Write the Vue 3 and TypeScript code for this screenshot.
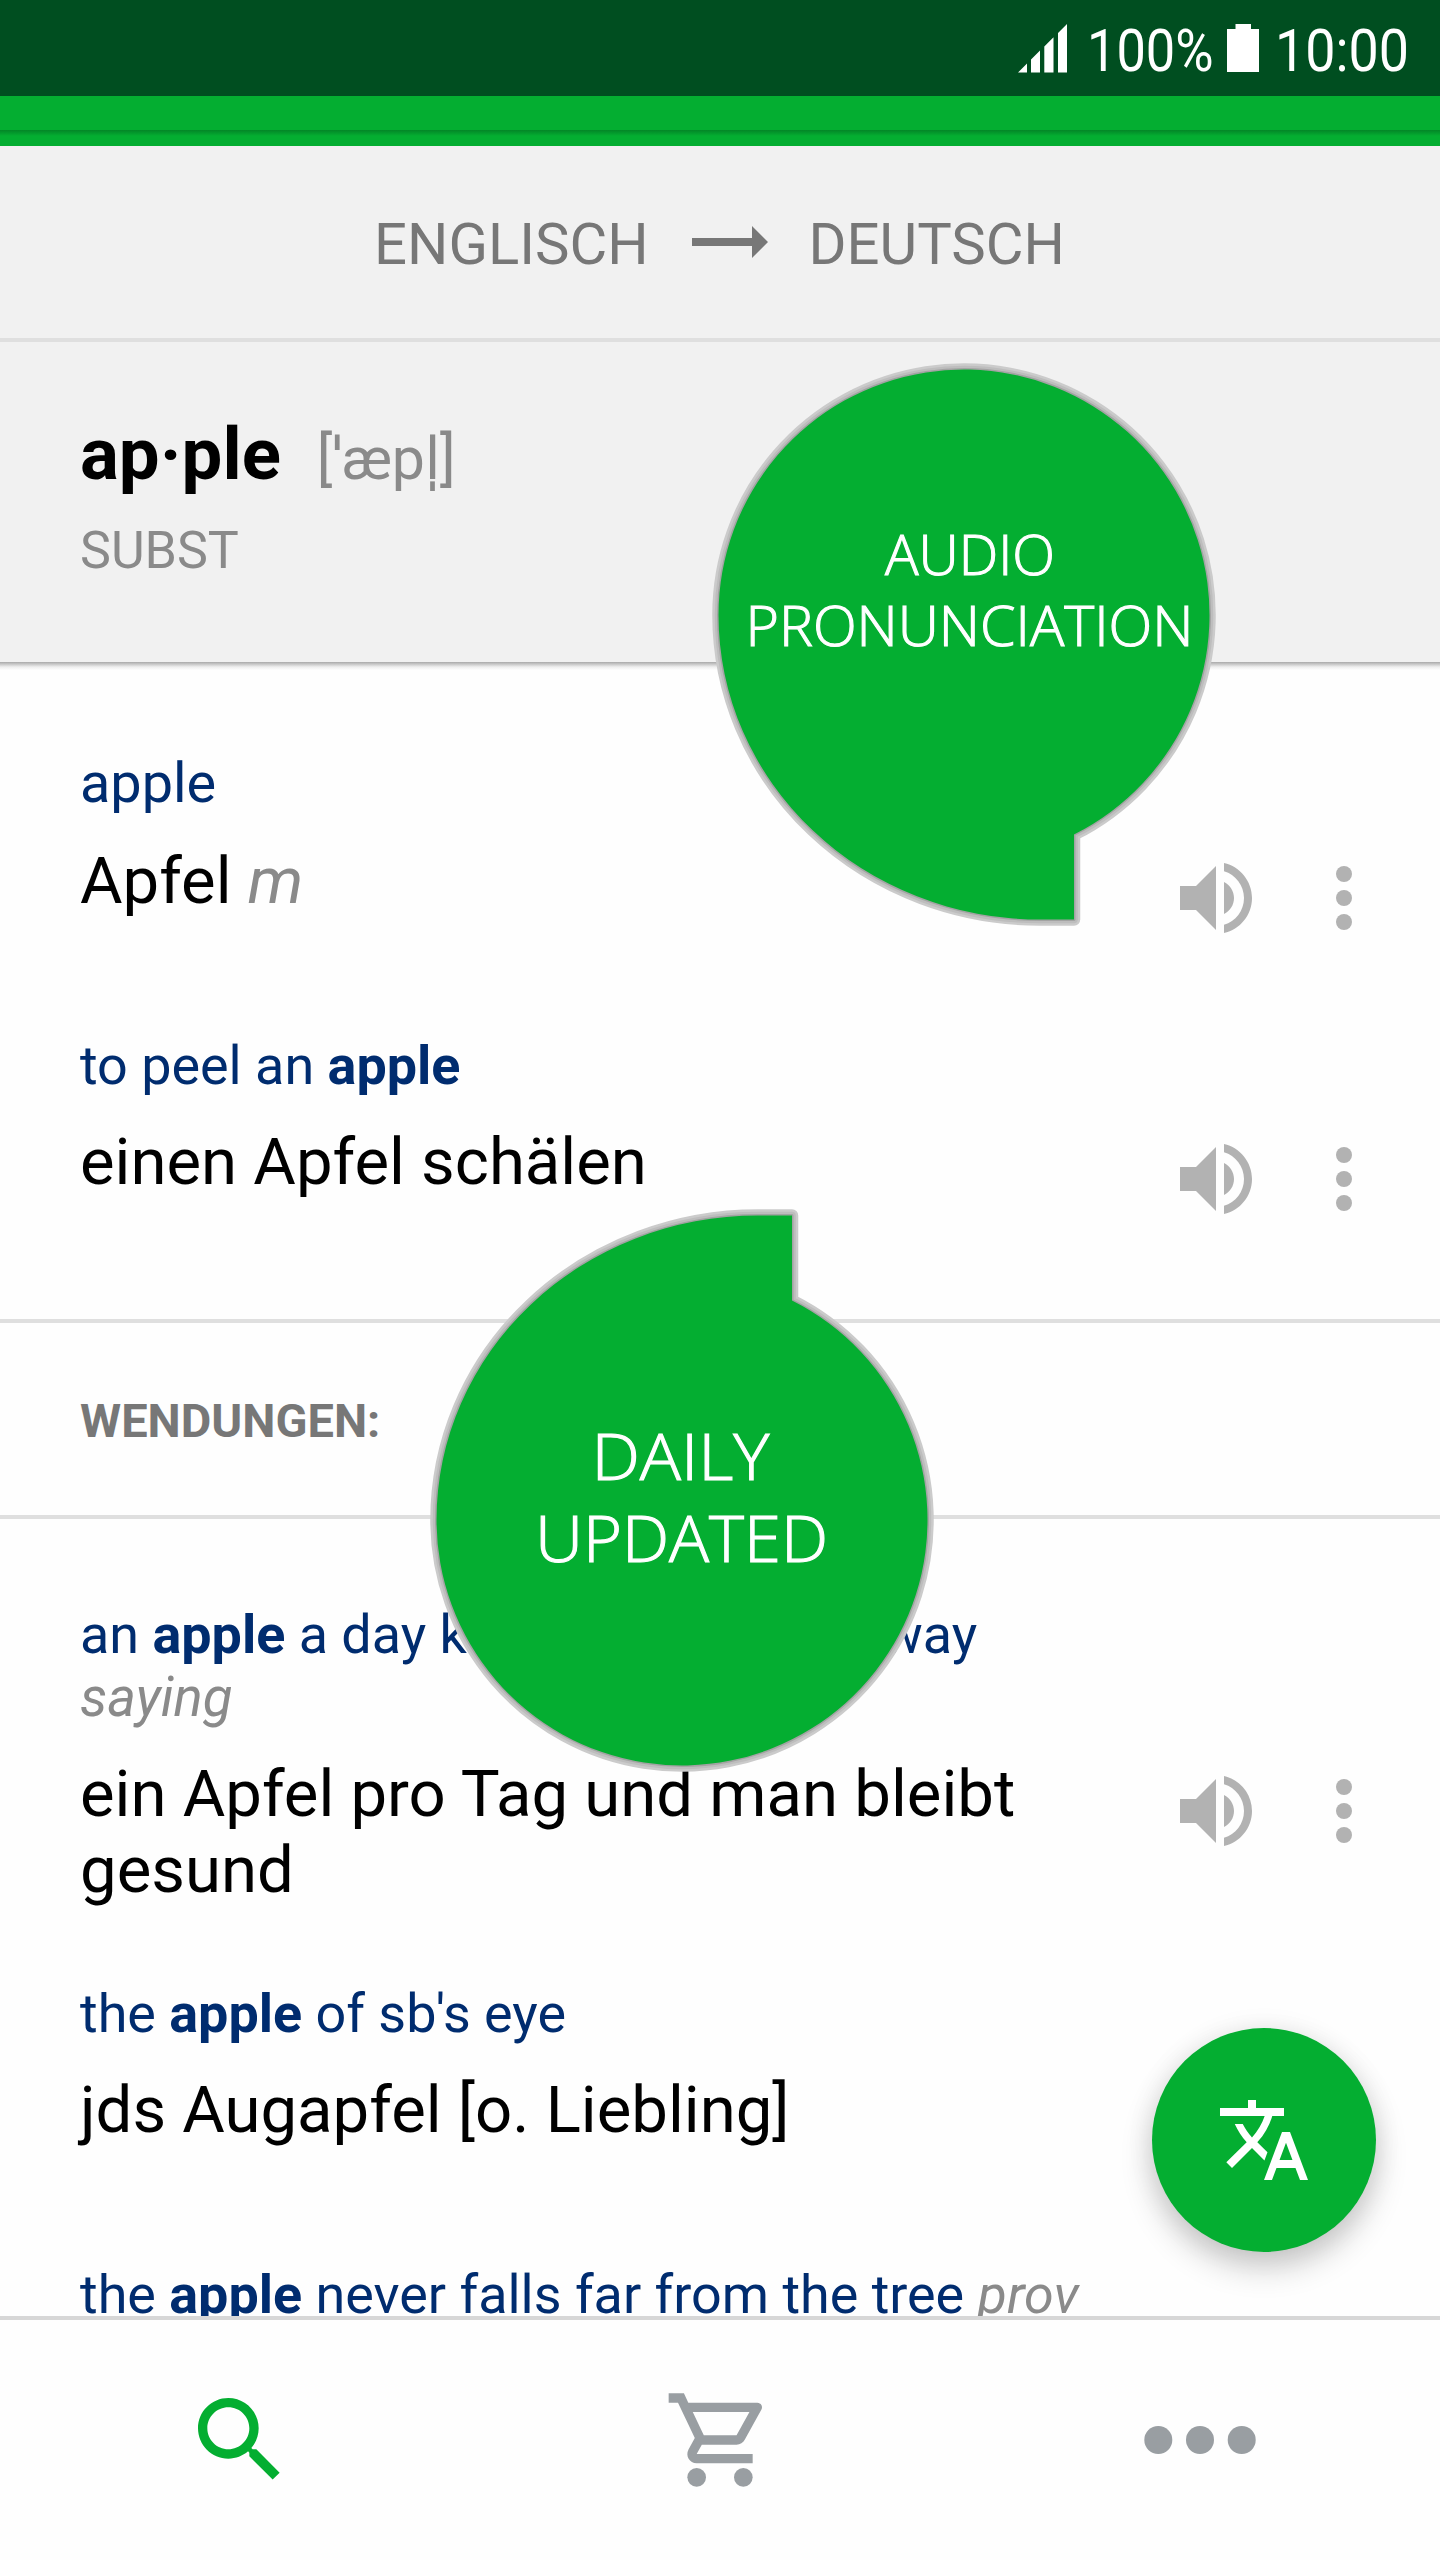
<script setup lang="ts">
interface Part {
  text: string
  kind?: 'bold' | 'note'
}
interface Entry {
  id: string
  source: Part[]
  label?: string
  target?: Part[]
  actions: boolean
}

const translations: Entry[] = [
  { id: 'apple', source: [{ text: 'apple' }], target: [{ text: 'Apfel ' }, { text: 'm', kind: 'note' }], actions: true },
  {
    id: 'peel',
    source: [{ text: 'to peel an ' }, { text: 'apple', kind: 'bold' }],
    target: [{ text: 'einen Apfel schälen' }],
    actions: true,
  },
]

const phrases: Entry[] = [
  {
    id: 'doctor',
    source: [{ text: 'an ' }, { text: 'apple', kind: 'bold' }, { text: ' a day keeps the doctor away' }],
    label: 'saying',
    target: [{ text: 'ein Apfel pro Tag und man bleibt gesund' }],
    actions: true,
  },
  {
    id: 'eye',
    source: [{ text: 'the ' }, { text: 'apple', kind: 'bold' }, { text: " of sb's eye" }],
    target: [{ text: 'jds Augapfel [o. Liebling]' }],
    actions: false,
  },
  {
    id: 'tree',
    source: [
      { text: 'the ' },
      { text: 'apple', kind: 'bold' },
      { text: ' never falls far from the tree ' },
      { text: 'prov', kind: 'note' },
    ],
    actions: false,
  },
]

const groups = [
  { id: 'translations', title: '', entries: translations },
  { id: 'phrases', title: 'WENDUNGEN:', entries: phrases },
]

const bubblePath =
  'M-245.5 0A245.5 245.5 0 1 1 110 219.5V304.5H76A321.5 304.5 0 0 1 -245.5 0Z'
</script>

<template>
  <div class="screen">
    <header class="status">
      <svg class="signal" width="49" height="49" viewBox="0 0 49 49">
        <path d="M0 48.500L9 39.500V48.500ZM13 48.500V35.500L22 26.500V48.500ZM26.300 48.500V22.500L35.500 13.300V48.500ZM40 48.500V9L49 0V48.500Z" />
      </svg>
      <svg class="level" width="130" height="72">
        <text x="0" y="54" font-size="60" textLength="126.5" lengthAdjust="spacingAndGlyphs">100%</text>
      </svg>
      <svg class="battery" width="32" height="48" viewBox="0 0 32 48">
        <path d="M8.500 0H24V5H32V48H0V5H8.500Z" />
      </svg>
      <svg class="clock" width="140" height="72">
        <text x="0" y="54" font-size="60" textLength="134" lengthAdjust="spacingAndGlyphs">10:00</text>
      </svg>
    </header>
    <div class="toolbar"><div class="toolbar-edge"></div></div>

    <div class="languages">
      <span>ENGLISCH</span>
      <svg class="arrow" width="76" height="32" viewBox="0 0 76 32"><path d="M0 12H60V0L76 16L60 32V20H0Z" /></svg>
      <span>DEUTSCH</span>
    </div>

    <section class="headword">
      <div class="headline">
        <strong>ap·ple</strong>
        <span class="phonetic">[ˈæpl̩]</span>
      </div>
      <div class="word-class">SUBST</div>
    </section>

    <main class="results">
      <template v-for="group in groups" :key="group.id">
        <h2 v-if="group.title" class="group-title">{{ group.title }}</h2>
        <article v-for="entry in group.entries" :key="entry.id" class="entry" :class="{ tall: entry.label }">
          <p class="source"><span v-for="(part, i) in entry.source" :key="i" :class="part.kind">{{ part.text }}</span></p>
          <p v-if="entry.label" class="source note">{{ entry.label }}</p>
          <div v-if="entry.target" class="target-row">
            <p class="target"><span v-for="(part, i) in entry.target" :key="i" :class="part.kind">{{ part.text }}</span></p>
            <div v-if="entry.actions" class="actions">
              <svg width="96" height="96" viewBox="0 0 24 24">
                <path d="M3 9v6h4l5 5V4L7 9H3zm13.500 3c0-1.770-1.020-3.290-2.500-4.030v8.050c1.480-.730 2.500-2.250 2.500-4.020zM14 3.230v2.060c2.890.860 5 3.540 5 6.710s-2.110 5.850-5 6.710v2.060c4.010-.910 7-4.490 7-8.770s-2.990-7.860-7-8.770z" />
              </svg>
              <svg width="96" height="96" viewBox="0 0 24 24">
                <circle cx="12" cy="6" r="2" /><circle cx="12" cy="12" r="2" /><circle cx="12" cy="18" r="2" />
              </svg>
            </div>
          </div>
        </article>
      </template>
    </main>

    <nav class="tabs">
      <button class="tab active">
        <svg width="112" height="112" viewBox="0 0 24 24">
          <path d="M15.500 14h-.790l-.280-.270C15.410 12.590 16 11.110 16 9.500 16 5.910 13.090 3 9.500 3S3 5.910 3 9.500 5.910 16 9.500 16c1.610 0 3.090-.590 4.230-1.570l.270.280v.790l5 4.990L20.490 19l-4.990-5zm-6 0C7.010 14 5 11.990 5 9.500S7.010 5 9.500 5 14 7.010 14 9.500 11.990 14 9.500 14z" />
        </svg>
      </button>
      <button class="tab">
        <svg width="112" height="112" viewBox="0 0 24 24">
          <path d="M15.550 13c.750 0 1.410-.410 1.750-1.030l3.580-6.490c.370-.660-.110-1.480-.870-1.480H5.210l-.940-2H1v2h2l3.600 7.590-1.350 2.440C4.520 15.370 5.480 17 7 17h12v-2H7l1.100-2h7.450zM6.160 6h12.150l-2.760 5H8.530L6.160 6z" />
          <circle cx="7" cy="20" r="2" /><circle cx="17" cy="20" r="2" />
        </svg>
      </button>
      <button class="tab">
        <svg width="112" height="28" viewBox="0 0 112 28">
          <circle cx="14.300" cy="14" r="14" /><circle cx="56" cy="14" r="14" /><circle cx="97.700" cy="14" r="14" />
        </svg>
      </button>
    </nav>

    <button class="fab">
      <svg width="96" height="96" viewBox="0 0 24 24">
        <path d="M12.870 15.070l-2.540-2.510.030-.030c1.740-1.940 2.980-4.170 3.710-6.530H17V4h-7V2H8v2H1v1.990h11.170C11.500 7.920 10.440 9.750 9 11.350 8.070 10.320 7.300 9.190 6.690 8h-2c.730 1.630 1.730 3.170 2.980 4.560l-5.090 5.020L4 19l5-5 3.110 3.110.760-2.040zM18.500 10h-2L12 22h2l1.120-3h4.750L21 22h2l-4.500-12zm-2.620 7l1.620-4.330L19.120 17h-3.240z" />
      </svg>
    </button>

    <svg class="bubble audio" width="520" height="580" viewBox="-260 -255 520 580">
      <path class="rim outer" :d="bubblePath" />
      <path class="rim middle" :d="bubblePath" />
      <path class="rim inner" :d="bubblePath" />
      <path class="body" :d="bubblePath" />
      <text x="-79" y="-40.500" font-size="56" textLength="170" lengthAdjust="spacingAndGlyphs">AUDIO</text>
      <text x="-218.500" y="30.500" font-size="56" textLength="448" lengthAdjust="spacingAndGlyphs">PRONUNCIATION</text>
    </svg>
    <svg class="bubble daily" width="520" height="580" viewBox="-260 -325 520 580">
      <g transform="scale(1 -1)">
        <path class="rim outer" :d="bubblePath" />
        <path class="rim middle" :d="bubblePath" />
        <path class="rim inner" :d="bubblePath" />
        <path class="body" :d="bubblePath" />
      </g>
      <text x="-90.500" y="-40" font-size="64" textLength="178" lengthAdjust="spacingAndGlyphs">DAILY</text>
      <text x="-147" y="42" font-size="64" textLength="293" lengthAdjust="spacingAndGlyphs">UPDATED</text>
    </svg>
  </div>
</template>

<style>
body {
  margin: 0;
  background: #fefefe;
}
</style>

<style scoped>
.screen {
  position: relative;
  display: flex;
  flex-direction: column;
  width: 1440px;
  height: 2560px;
  overflow: hidden;
  background: #fefefe;
  font-family: Roboto, 'Noto Sans', sans-serif;
  color: #000;
}
p,
h2 {
  margin: 0;
}
svg {
  display: block;
  flex: none;
  overflow: visible;
}
button {
  padding: 0;
  border: 0;
  background: none;
}
.status {
  display: flex;
  flex: none;
  align-items: flex-start;
  height: 96px;
  box-sizing: border-box;
  padding-left: 1018px;
  background: #004e20;
  fill: #fff;
}
.signal {
  margin-top: 23.5px;
}
.level {
  margin: 17px 0 0 20px;
}
.battery {
  margin: 24px 0 0 10px;
}
.clock {
  margin: 17px 0 0 15.5px;
}
.toolbar {
  flex: none;
  height: 50px;
  padding-top: 34px;
  box-sizing: border-box;
  background: #04ae31;
}
.toolbar-edge {
  height: 6px;
  background: linear-gradient(rgba(0, 60, 20, 0.35), rgba(0, 60, 20, 0));
}
.languages {
  display: flex;
  flex: none;
  align-items: center;
  justify-content: center;
  height: 196px;
  box-sizing: border-box;
  padding: 4px 1px 0 0;
  border-bottom: 4px solid #dfdfdf;
  background: #f1f1f1;
  color: #777;
  fill: #777;
  font-size: 58px;
  line-height: 68px;
}
.arrow {
  margin: 0 41px 4px 43px;
}
.headword {
  flex: none;
  height: 320px;
  box-sizing: border-box;
  padding: 71px 80px 0;
  background: #f1f1f1;
}
.headline {
  display: flex;
  align-items: baseline;
  gap: 36px;
  font-size: 72.6px;
  line-height: 84px;
}
.phonetic {
  font-size: 59px;
  color: #8a8a8a;
}
.word-class {
  margin-top: 21px;
  font-size: 52px;
  line-height: 58px;
  color: #8a8a8a;
}
.results {
  flex: 1;
  min-height: 0;
  overflow: hidden;
  padding-top: 89px;
  background: linear-gradient(#a9a9a9, #c6c6c6 2px, #efefef 5px, #fefefe 8px) top / 100% 8px no-repeat;
}
.entry {
  padding: 0 48px 0 80px;
  margin-bottom: 88px;
}
.entry.tall {
  margin-bottom: 74px;
}
.source {
  font-size: 53.9px;
  line-height: 63px;
  white-space: pre-wrap;
  color: #002c6f;
}
.entry:first-child .source {
  font-size: 55.8px;
  line-height: 65px;
}
.bold {
  font-weight: 700;
}
.note {
  font-style: italic;
  color: #8a8a8a;
}
.source.note {
  font-size: 54.5px;
}
.target-row {
  display: flex;
  align-items: flex-start;
  justify-content: space-between;
  min-height: 103px;
  margin-top: 27px;
}
.target {
  width: 1020px;
  font-size: 65.25px;
  line-height: 76px;
  white-space: pre-wrap;
}
.actions {
  display: flex;
  gap: 32px;
  margin-top: 7px;
  fill: #b2b2b2;
}
.group-title {
  height: 200px;
  box-sizing: border-box;
  margin: 92px 0 84px;
  padding: 0 80px;
  border: solid #dfdfdf;
  border-width: 4px 0;
  font-size: 47px;
  line-height: 195px;
  color: #777;
}
.tabs {
  display: flex;
  flex: none;
  height: 244px;
  box-sizing: border-box;
  border-top: 4px solid #d7d7d7;
  background: #fefefe;
}
.tab {
  display: flex;
  flex: 1;
  align-items: center;
  justify-content: center;
  fill: #999ea2;
}
.tab.active {
  fill: #04ae31;
}
.fab {
  position: absolute;
  left: 1152px;
  top: 2028px;
  display: flex;
  align-items: center;
  justify-content: center;
  width: 224px;
  height: 224px;
  border-radius: 50%;
  background: #04ae31;
  fill: #fff;
  box-shadow:
    0 16px 32px rgba(0, 0, 0, 0.2),
    0 2px 28px rgba(0, 0, 0, 0.08);
}
.bubble {
  position: absolute;
  font-family: 'Open Sans', 'Noto Sans', sans-serif;
  font-weight: 300;
  fill: #fff;
}
.bubble text {
  stroke: #fff;
  stroke-width: 1.1px;
}
.audio {
  left: 703.5px;
  top: 360px;
}
.daily {
  left: 421.5px;
  top: 1195px;
}
.body {
  fill: #04ae31;
}
.rim {
  fill: none;
  stroke-linejoin: round;
}
.outer {
  stroke: #cbcbcb;
  stroke-width: 12.5px;
}
.middle {
  stroke: #bdbdbd;
  stroke-width: 7.5px;
}
.inner {
  stroke: #a3a3a3;
  stroke-width: 3px;
}
</style>
